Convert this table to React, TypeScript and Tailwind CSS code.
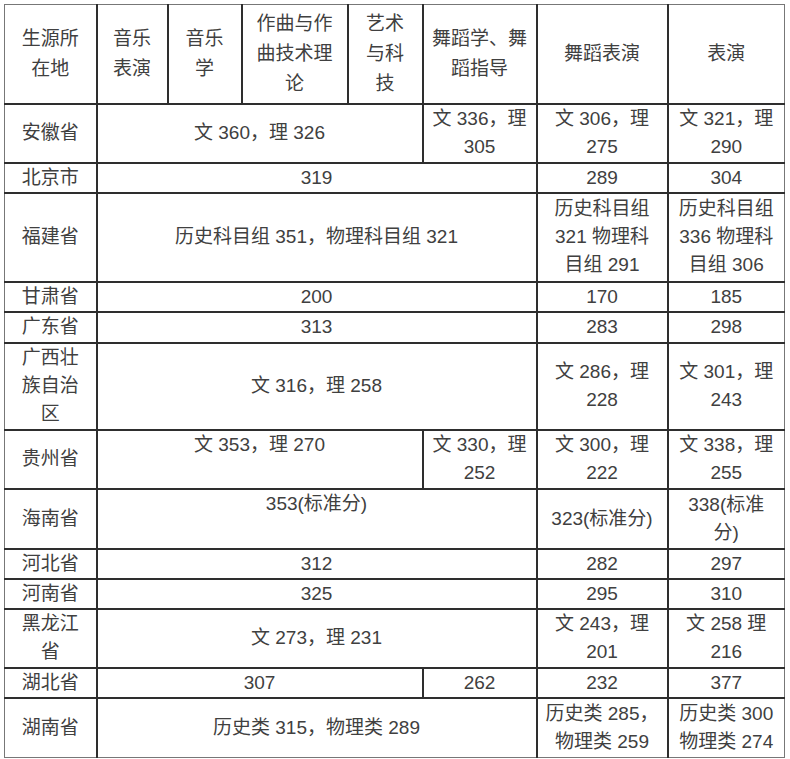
import React from "react";

type Cell = {
  t: React.ReactNode;
  span?: number;
  v?: "top" | "middle";
};

const B = () => <br />;

const header: React.ReactNode[] = [
  <>生源所<B />在地</>,
  <>音乐<B />表演</>,
  <>音乐<B />学</>,
  <>作曲与作<B />曲技术理<B />论</>,
  <>艺术<B />与科<B />技</>,
  <>舞蹈学、舞<B />蹈指导</>,
  <>舞蹈表演</>,
  <>表演</>,
];

const rows: { h: string; name: React.ReactNode; cells: Cell[] }[] = [
  {
    h: "h-[59px]",
    name: "安徽省",
    cells: [
      { t: "文 360，理 326", span: 4 },
      { t: <>文 336，理<B />305</> },
      { t: <>文 306，理<B />275</> },
      { t: <>文 321，理<B />290</> },
    ],
  },
  { h: "h-[30px]", name: "北京市", cells: [{ t: "319", span: 5 }, { t: "289" }, { t: "304" }] },
  {
    h: "h-[89px]",
    name: "福建省",
    cells: [
      { t: "历史科目组 351，物理科目组 321", span: 5 },
      { t: <>历史科目组<B />321 物理科<B />目组 291</> },
      { t: <>历史科目组<B />336 物理科<B />目组 306</> },
    ],
  },
  { h: "h-[30px]", name: "甘肃省", cells: [{ t: "200", span: 5 }, { t: "170" }, { t: "185" }] },
  { h: "h-[31px]", name: "广东省", cells: [{ t: "313", span: 5 }, { t: "283" }, { t: "298" }] },
  {
    h: "h-[87px]",
    name: <>广西壮<B />族自治<B />区</>,
    cells: [
      { t: "文 316，理 258", span: 5 },
      { t: <>文 286，理<B />228</> },
      { t: <>文 301，理<B />243</> },
    ],
  },
  {
    h: "h-[59px]",
    name: "贵州省",
    cells: [
      { t: "文 353，理 270", span: 4, v: "top" },
      { t: <>文 330，理<B />252</> },
      { t: <>文 300，理<B />222</> },
      { t: <>文 338，理<B />255</> },
    ],
  },
  {
    h: "h-[60px]",
    name: "海南省",
    cells: [
      { t: "353(标准分)", span: 5, v: "top" },
      { t: "323(标准分)" },
      { t: <>338(标准<B />分)</> },
    ],
  },
  { h: "h-[30px]", name: "河北省", cells: [{ t: "312", span: 5 }, { t: "282" }, { t: "297" }] },
  { h: "h-[30px]", name: "河南省", cells: [{ t: "325", span: 5 }, { t: "295" }, { t: "310" }] },
  {
    h: "h-[59px]",
    name: <>黑龙江<B />省</>,
    cells: [
      { t: "文 273，理 231", span: 5 },
      { t: <>文 243，理<B />201</> },
      { t: <>文 258 理<B />216</> },
    ],
  },
  {
    h: "h-[30px]",
    name: "湖北省",
    cells: [{ t: "307", span: 4 }, { t: "262" }, { t: "232" }, { t: "377" }],
  },
  {
    h: "h-[60px]",
    name: "湖南省",
    cells: [
      { t: "历史类 315，物理类 289", span: 5 },
      { t: <>历史类 285，<B />物理类 259</> },
      { t: <>历史类 300<B />物理类 274</> },
    ],
  },
];

const td = "border-2 border-[#2e2e2e] text-center p-0 leading-[28px]";

export default function App() {
  return (
    <div className="w-[790px] h-[759px] bg-white overflow-hidden pt-[4px] pl-[4px]">
      <table
        className="table-fixed border-collapse text-[19px] text-[#404040]"
        style={{ fontFamily: '"Liberation Sans", "Noto Sans CJK SC", sans-serif', width: 780 }}
      >
        <colgroup>
          <col className="w-[92px]" />
          <col className="w-[71px]" />
          <col className="w-[74px]" />
          <col className="w-[106px]" />
          <col className="w-[75px]" />
          <col className="w-[114px]" />
          <col className="w-[131px]" />
          <col className="w-[117px]" />
        </colgroup>
        <tbody>
          <tr className="h-[99px]">
            {header.map((h, i) => (
              <td
                key={i}
                className={`${td} leading-[30px] align-middle border-t-[1px] border-t-[#777] ${i === 0 ? "border-l-[1px] border-l-[#777]" : ""} ${i === 7 ? "border-r-[1px] border-r-[#777]" : ""}`}
              >
                {h}
              </td>
            ))}
          </tr>
          {rows.map((r, ri) => (
            <tr key={ri} className={r.h}>
              <td className={`${td} align-middle border-l-[1px] border-l-[#777] ${ri === rows.length - 1 ? "border-b-[1px] border-b-[#777]" : ""}`}>
                {r.name}
              </td>
              {r.cells.map((c, ci) => (
                <td
                  key={ci}
                  colSpan={c.span ?? 1}
                  className={`${td} ${c.v === "top" ? "align-top" : "align-middle"} ${ci === r.cells.length - 1 ? "border-r-[1px] border-r-[#777]" : ""} ${ri === rows.length - 1 ? "border-b-[1px] border-b-[#777]" : ""}`}
                >
                  {c.t}
                </td>
              ))}
            </tr>
          ))}
        </tbody>
      </table>
    </div>
  );
}
